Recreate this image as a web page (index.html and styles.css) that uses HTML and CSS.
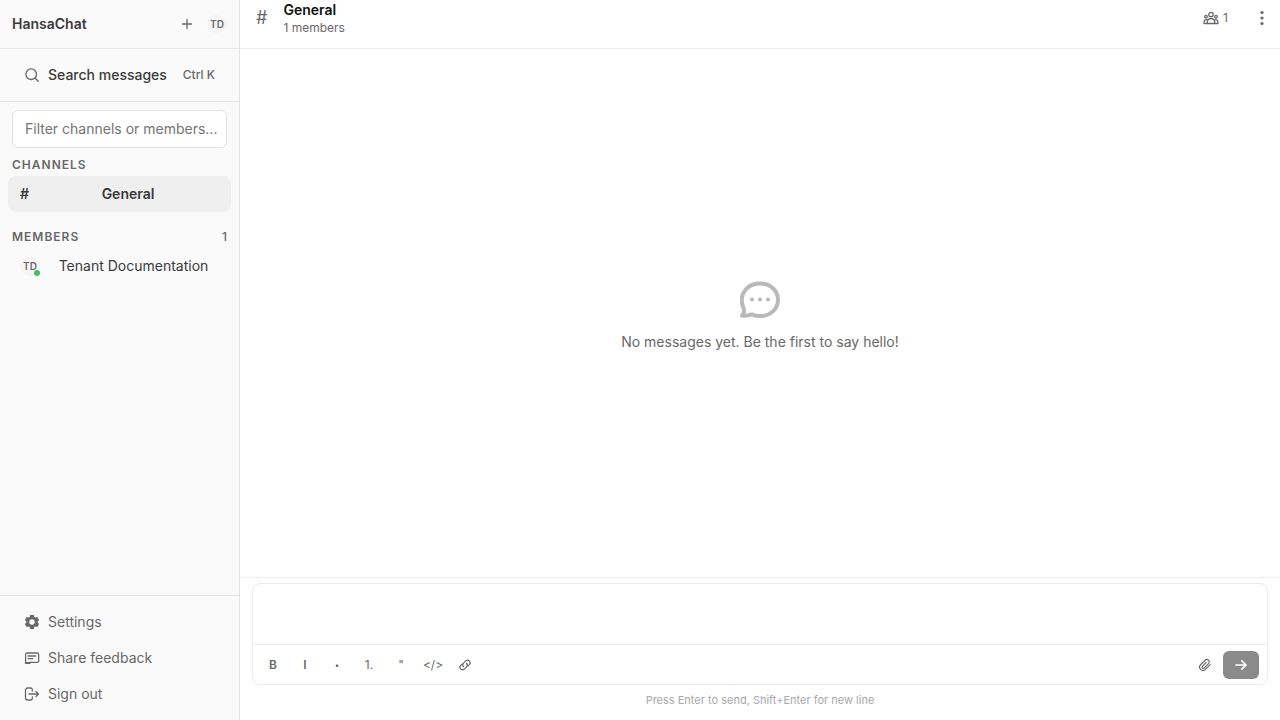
FILE: index.html
```html
<!DOCTYPE html>
<html lang="en">
<head>
<meta charset="utf-8">
<meta name="viewport" content="width=device-width, initial-scale=1">
<title>HansaChat</title>
<link rel="stylesheet" href="styles.css">
</head>
<body>
<div class="app">
  <aside class="sidebar">
    <header class="brand-bar">
      <h1 class="brand">HansaChat</h1>
      <button class="icon-button" type="button" aria-label="New">
        <svg class="icon" viewBox="0 0 16 16"><path d="M8 3.500v9M3.500 8h9"/></svg>
      </button>
      <button class="avatar" type="button" aria-label="Account">TD</button>
    </header>
    <div class="search-bar">
      <button class="search" type="button">
        <svg class="icon" viewBox="0 0 16 16"><circle cx="7.200" cy="7.200" r="5.300"/><path d="M11 11l3.300 3.300"/></svg>
        <span class="search-label">Search messages</span>
        <span class="shortcut">Ctrl K</span>
      </button>
    </div>
    <nav class="lists">
      <input class="filter" type="text" placeholder="Filter channels or members..." aria-label="Filter channels or members">
      <h2 class="section-title">CHANNELS</h2>
      <button class="row row-active" type="button"><span>#</span><span class="row-name">General</span></button>
      <h2 class="section-title section-members">MEMBERS <span class="count">1</span></h2>
      <button class="row" type="button"><span class="avatar member-avatar">TD<span class="presence"></span></span><span class="row-name">Tenant Documentation</span></button>
    </nav>
    <footer class="side-footer">
      <button class="row foot-row" type="button">
        <svg class="icon" viewBox="0 0 16 16"><path class="gear" fill-rule="evenodd" d="M6.200 1h3.600l.5 2 1 .6 2-.6 1.800 3.100L13.600 7.500v1l1.500 1.400-1.800 3.100-2-.6-1 .6-.5 2H6.200l-.5-2-1-.6-2 .6L.9 9.900l1.500-1.400v-1L.9 6.100 2.700 3l2 .6 1-.6zM8 5.300a2.700 2.700 0 1 0 0 5.400 2.700 2.700 0 0 0 0-5.400z"/></svg>
        <span>Settings</span>
      </button>
      <button class="row foot-row" type="button">
        <svg class="icon" viewBox="0 0 16 16"><path d="M6 12.300h7.300a1.400 1.400 0 0 0 1.400-1.400V4.400A1.400 1.400 0 0 0 13.300 3H3a1.400 1.400 0 0 0-1.400 1.400v8.900h4.200l1.200-1M1.600 12.700h4.200M4.200 6h7.600M4.200 8.700h4.600"/></svg>
        <span>Share feedback</span>
      </button>
      <button class="row foot-row" type="button">
        <svg class="icon" viewBox="0 0 16 16"><path d="M8.300 5V3.500A1.500 1.500 0 0 0 6.800 2H3.500A2 2 0 0 0 1.500 4v8a2 2 0 0 0 2 2h3.300a1.500 1.500 0 0 0 1.500-1.500V11M5 8h9.500M12 5.500L14.500 8 12 10.500"/></svg>
        <span>Sign out</span>
      </button>
    </footer>
  </aside>
  <main class="main">
    <header class="channel-bar">
      <span class="hash">#</span>
      <div class="channel-info">
        <h2 class="channel-name">General</h2>
        <p class="channel-members">1 members</p>
      </div>
      <button class="members-button" type="button" aria-label="Members">
        <svg class="icon" viewBox="0 0 16 16"><circle cx="8" cy="4.500" r="2.200"/><circle cx="3" cy="6.700" r="1.300"/><circle cx="13" cy="6.700" r="1.300"/><path d="M4.300 13.500v-1.300a3.700 3.700 0 0 1 7.400 0v1.300zM4.300 13.500H1.100v-1.700a2 2 0 0 1 3.400-1.500M11.700 13.500h3.200v-1.700a2 2 0 0 0-3.400-1.500"/></svg>
        <span>1</span>
      </button>
      <button class="icon-button more-button" type="button" aria-label="More">
        <svg class="icon" viewBox="0 0 16 16"><g class="solid"><circle cx="8" cy="2.500" r="1.600"/><circle cx="8" cy="8" r="1.600"/><circle cx="8" cy="13.500" r="1.600"/></g></svg>
      </button>
    </header>
    <section class="messages">
      <svg class="empty-icon" viewBox="0 0 40 40"><path d="M3.800 29C.5 21.500 1.500 14 6.300 8.800 9.800 5.200 14.700 3.500 20 3.500c10.500 0 18 7.200 18 16.300s-7.500 16.300-18 16.300c-3.100 0-5.800-.6-8.200-1.700-2.800 1-5.700 1.700-9.800 1.400 1.400-1.800 2.600-4.500 1.800-6.800z"/><g class="solid"><circle cx="12" cy="19.500" r="2"/><circle cx="20" cy="19.500" r="2"/><circle cx="28" cy="19.500" r="2"/></g></svg>
      <p class="empty-text">No messages yet. Be the first to say hello!</p>
    </section>
    <footer class="composer">
      <div class="editor">
        <textarea class="message-input" aria-label="Message"></textarea>
        <div class="toolbar">
          <button class="tool tool-bold" type="button" aria-label="Bold">B</button>
          <button class="tool tool-bold" type="button" aria-label="Italic">I</button>
          <button class="tool tool-bullet" type="button" aria-label="Bulleted list">•</button>
          <button class="tool" type="button" aria-label="Numbered list">1.</button>
          <button class="tool" type="button" aria-label="Quote">"</button>
          <button class="tool" type="button" aria-label="Code">&lt;/&gt;</button>
          <button class="tool" type="button" aria-label="Link">
            <svg class="icon" viewBox="0 0 16 16"><path d="M6.300 10a3 3 0 0 1 0-4.200l2.700-2.700a3 3 0 0 1 4.200 4.200l-1.700 1.700M9.700 6a3 3 0 0 1 0 4.200L7 12.900a3 3 0 0 1-4.200-4.200L4.500 7"/></svg>
          </button>
          <span class="spacer"></span>
          <button class="tool" type="button" aria-label="Attach file">
            <svg class="icon" viewBox="0 0 16 16"><path d="M14 7.500l-5.600 5.600a3.800 3.800 0 0 1-5.400-5.400l5.100-5.100a2.700 2.700 0 0 1 3.900 3.900l-5 5a1.400 1.400 0 0 1-2-2l4.500-4.500"/></svg>
          </button>
          <button class="send" type="submit" aria-label="Send">
            <svg class="icon" viewBox="0 0 16 16"><path d="M3 8h10M8.800 3.800L13 8l-4.200 4.200"/></svg>
          </button>
        </div>
      </div>
      <p class="hint">Press Enter to send, Shift+Enter for new line</p>
    </footer>
  </main>
</div>
</body>
</html>
```
FILE: styles.css
```css
* { box-sizing: border-box; }
body, h1, h2, p { margin: 0; }
body {
  font-family: Inter, "Liberation Sans", sans-serif;
  font-size: 14px;
  line-height: 20px;
  color: #686868;
  background: #fff;
}
button, input, textarea {
  font: inherit;
  color: inherit;
  border: 0;
  padding: 0;
  background: none;
}
.icon {
  width: 16px;
  height: 16px;
  flex: none;
  fill: none;
  stroke: currentColor;
  stroke-width: 1.3;
  stroke-linecap: round;
  stroke-linejoin: round;
}
.solid, .gear { fill: currentColor; stroke: none; }
.app { display: flex; height: 100vh; }

.sidebar {
  display: flex;
  flex-direction: column;
  width: 240px;
  flex: none;
  background: #fafafa;
  border-right: 1px solid #e3e3e3;
}
.brand-bar {
  display: flex;
  align-items: center;
  height: 49px;
  padding: 0 12px;
  border-bottom: 1px solid #e6e6e6;
}
.brand { flex: 1; font-size: 14px; font-weight: 600; color: #3a3a3a; }
.icon-button {
  display: flex;
  align-items: center;
  justify-content: center;
  width: 28px;
  height: 28px;
}
.avatar {
  display: flex;
  align-items: center;
  justify-content: center;
  width: 20px;
  height: 20px;
  margin-left: 6px;
  border-radius: 50%;
  background: #f5f5f5;
  font-size: 10px;
  font-weight: 600;
  color: #6a6a6a;
}
.search-bar { padding: 8px 12px; border-bottom: 1px solid #e6e6e6; }
.search {
  display: flex;
  align-items: center;
  gap: 8px;
  width: 100%;
  height: 36px;
  padding: 0 12px;
  text-align: left;
}
.search-label { flex: 1; font-weight: 500; color: #3a3a3a; white-space: nowrap; }
.shortcut { font-size: 12px; font-weight: 500; }
.lists { flex: 1; padding: 8px; overflow: auto; }
.filter {
  display: block;
  width: calc(100% - 8px);
  height: 38px;
  margin: 0 4px 7px;
  padding: 0 6px 1px 12px;
  border: 1px solid #e3e3e3;
  border-radius: 6px;
  background: #fff;
}
.filter::placeholder { color: #737373; opacity: 1; }
.section-title {
  display: flex;
  justify-content: space-between;
  padding: 0 4px 1px;
  font-size: 12px;
  font-weight: 600;
  letter-spacing: 1px;
}
.section-members { margin-top: 15px; }
.count { font-weight: 500; letter-spacing: 0; }
.row {
  display: flex;
  align-items: center;
  gap: 8px;
  width: 100%;
  height: 36px;
  padding: 0 12px;
  border-radius: 8px;
  color: #3a3a3a;
}
.row-name { flex: 1; white-space: nowrap; }
.row-active { background: #efefef; font-weight: 600; }
.member-avatar { position: relative; flex: none; margin: 0; }
.presence {
  position: absolute;
  right: 0;
  bottom: 0;
  width: 6px;
  height: 6px;
  border-radius: 50%;
  background: #4cbb5c;
}
.side-footer { padding: 8px 12px; border-top: 1px solid #e6e6e6; }
.foot-row { color: #686868; }

.main { display: flex; flex-direction: column; flex: 1; min-width: 0; }
.channel-bar {
  display: flex;
  align-items: center;
  padding: 0 4px 12px 16px;
  border-bottom: 1px solid #ebebeb;
}
.hash { font-size: 18px; margin-right: 16px; }
.channel-info { flex: 1; }
.channel-name { font-size: 14px; font-weight: 600; color: #111; }
.channel-members { font-size: 12px; line-height: 16px; }
.members-button {
  display: flex;
  align-items: center;
  gap: 4px;
  font-size: 12px;
}
.more-button { margin-left: 20px; }
.messages {
  display: flex;
  flex: 1;
  flex-direction: column;
  align-items: center;
  justify-content: center;
  gap: 12px;
  padding-top: 5px;
}
.empty-icon {
  width: 40px;
  height: 40px;
  color: #b9b9b9;
  fill: none;
  stroke: currentColor;
  stroke-width: 4;
  stroke-linejoin: round;
}
.composer { padding: 5px 12px 11px; border-top: 1px solid #efefef; }
.editor { border: 1px solid #ebebeb; border-radius: 8px; }
.message-input {
  display: block;
  width: 100%;
  height: 60px;
  padding: 10px 12px;
  resize: none;
  outline: 0;
}
.toolbar {
  display: flex;
  align-items: center;
  gap: 4px;
  padding: 6px 8px 5px 6px;
  border-top: 1px solid #ebebeb;
}
.tool {
  display: flex;
  align-items: center;
  justify-content: center;
  width: 28px;
  height: 28px;
  font-size: 12px;
}
.tool-bold { font-weight: 600; }
.tool-bullet { font-size: 8px; }
.tool .icon { width: 14px; height: 14px; }
.spacer { flex: 1; }
.send {
  display: flex;
  align-items: center;
  justify-content: center;
  width: 36px;
  height: 28px;
  border-radius: 6px;
  background: #8a8a8a;
  color: #fff;
}
.send .icon { stroke-width: 1.7; }
.hint {
  padding-top: 6px;
  font-size: 11px;
  line-height: 18px;
  text-align: center;
  color: #a8a8a8;
}
```
